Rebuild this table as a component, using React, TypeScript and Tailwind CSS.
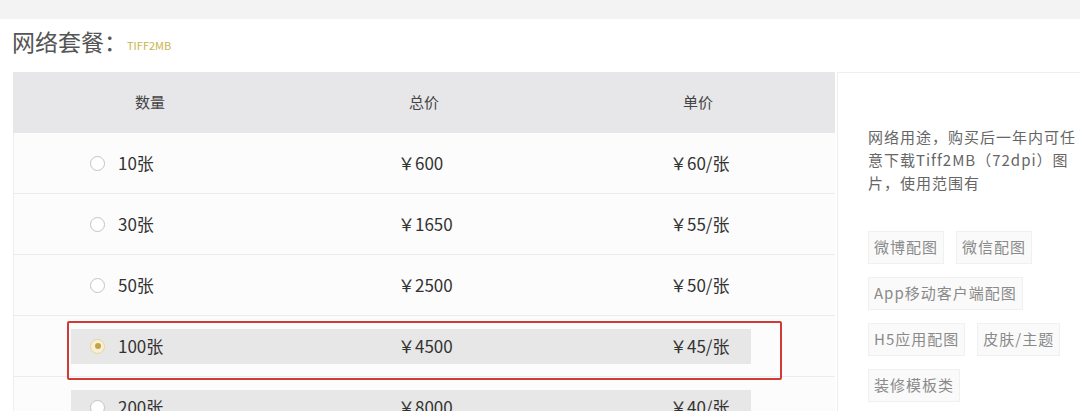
import React from "react";

const rows = [
  { qty: "10张", total: "￥600", unit: "￥60/张" },
  { qty: "30张", total: "￥1650", unit: "￥55/张" },
  { qty: "50张", total: "￥2500", unit: "￥50/张" },
  { qty: "100张", total: "￥4500", unit: "￥45/张", selected: true, hl: true },
  { qty: "200张", total: "￥8000", unit: "￥40/张", hl: true },
];

const tags = [
  ["微博配图", "微信配图"],
  ["App移动客户端配图"],
  ["H5应用配图", "皮肤/主题"],
  ["装修模板类"],
];

function Radio({ checked }: { checked?: boolean }) {
  if (checked) {
    return (
      <span className="flex h-[15px] w-[15px] shrink-0 items-center justify-center rounded-full border border-[#e6d49a] bg-[#f8f0d6]">
        <span className="h-[6px] w-[6px] rounded-full bg-[#c6a14a]" />
      </span>
    );
  }
  return <span className="h-[15px] w-[15px] shrink-0 rounded-full border-[1.5px] border-[#c4c4c4] bg-white" />;
}

export default function App() {
  return (
    <div className="h-[411px] w-[1080px] overflow-hidden bg-white font-['Noto_Sans_CJK_SC',sans-serif]">
      <div className="h-[19px] bg-[#f3f3f3]" />
      <div className="mt-[7px] flex h-[30px] items-center pl-[12px]">
        <span className="text-[23px] leading-[30px] text-[#555555]">网络套餐：</span>
        <span className="ml-[0px] mt-[8px] text-[11px] leading-[14px] text-[#c8b54c]">TIFF2MB</span>
      </div>
      <div className="mt-[16px] flex pl-[13px]">
        <div className="w-[822px] shrink-0">
          <div className="grid h-[61px] grid-cols-3 items-center bg-[#e7e7e9] text-[15px] text-[#444444]">
            <div className="text-center">数量</div>
            <div className="text-center">总价</div>
            <div className="text-center">单价</div>
          </div>
          <div className="border-l border-[#eeeeee] bg-[#fcfcfc]">
            {rows.map((r, i) => (
              <div key={i} className="relative flex h-[61px] items-center border-b border-[#ececec]">
                <div
                  className={
                    "ml-[57px] flex h-[35px] w-[680px] items-center pl-[19px] text-[17px] text-[#333333] " +
                    (r.hl ? "bg-[#e7e7e7]" : "")
                  }
                >
                  <div className="flex w-[308px] items-center gap-[13px]">
                    <Radio checked={r.selected} />
                    <span>{r.qty}</span>
                  </div>
                  <div className="w-[272px]">{r.total}</div>
                  <div>{r.unit}</div>
                </div>
                {r.selected && (
                  <div className="pointer-events-none absolute left-[53px] top-[5px] z-10 h-[59px] w-[715px] rounded-[2px] border-2 border-[#d23a36]" />
                )}
              </div>
            ))}
          </div>
        </div>
        <div className="ml-[2px] flex-1 border-l border-t border-[#eeeeee] bg-white pl-[30px] pt-[52px]">
          <p className="w-[214px] text-[15px] leading-[23px] tracking-[1px] text-[#666666]">
            网络用途，购买后一年内可任意下载Tiff2MB（72dpi）图片，使用范围有
          </p>
          <div className="mt-[37px] flex flex-col gap-[13px]">
            {tags.map((row, i) => (
              <div key={i} className="flex gap-[12px]">
                {row.map((t) => (
                  <span
                    key={t}
                    className="flex h-[33px] items-center border border-[#f0f0f0] bg-[#fafafa] px-[5px] text-[15px] tracking-[1px] text-[#8a8a8a]"
                  >
                    {t}
                  </span>
                ))}
              </div>
            ))}
          </div>
        </div>
      </div>
    </div>
  );
}
